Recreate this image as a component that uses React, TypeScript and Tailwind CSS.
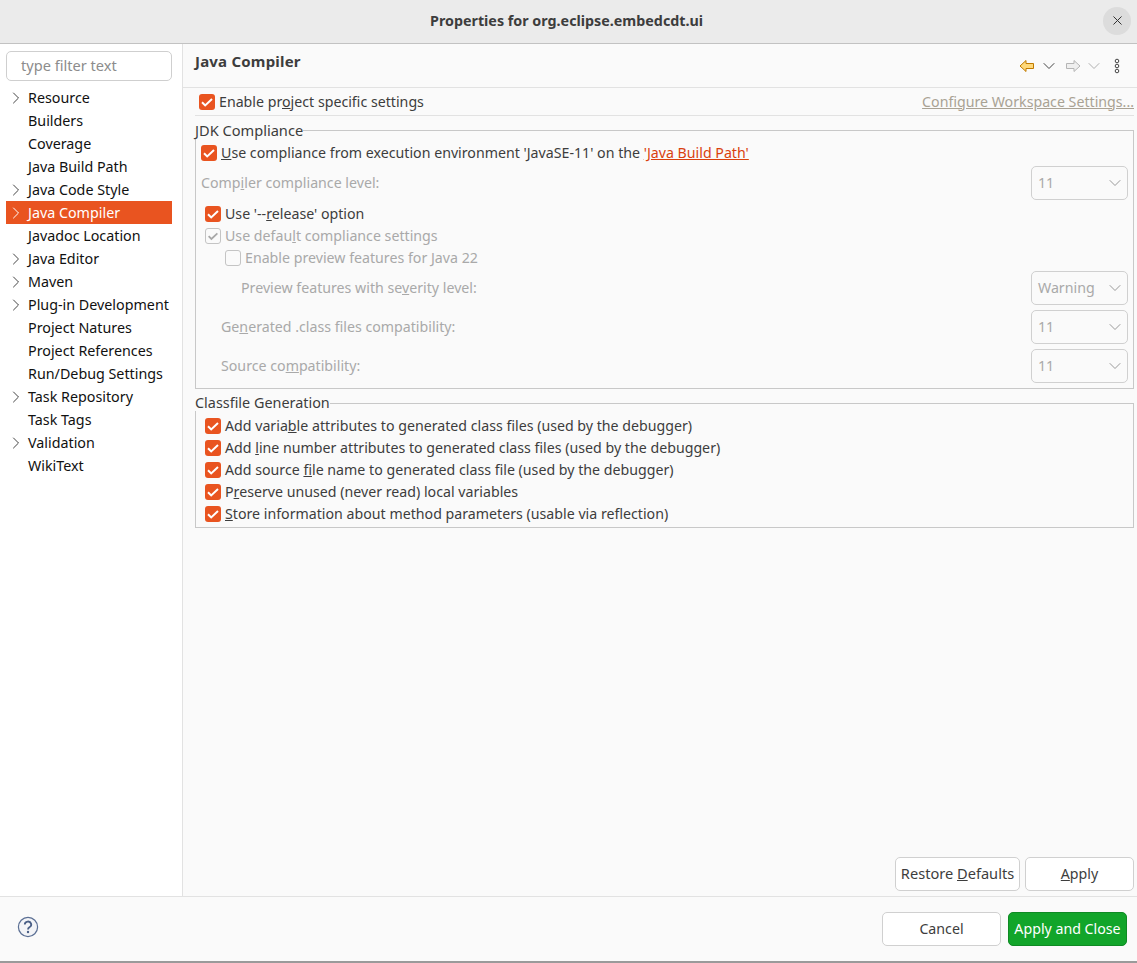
import { ChevronDown, ChevronRight, X } from "lucide-react";

const font = { fontFamily: '"Noto Sans", sans-serif' };

const tree = [
  { name: "Resource", arrow: true },
  { name: "Builders" },
  { name: "Coverage" },
  { name: "Java Build Path" },
  { name: "Java Code Style", arrow: true },
  { name: "Java Compiler", arrow: true, selected: true },
  { name: "Javadoc Location" },
  { name: "Java Editor", arrow: true },
  { name: "Maven", arrow: true },
  { name: "Plug-in Development", arrow: true },
  { name: "Project Natures" },
  { name: "Project References" },
  { name: "Run/Debug Settings" },
  { name: "Task Repository", arrow: true },
  { name: "Task Tags" },
  { name: "Validation", arrow: true },
  { name: "WikiText" },
];

const CheckMark = ({ color }: { color: string }) => (
  <svg viewBox="0 0 16 16" className="w-4 h-4" fill="none" stroke={color} strokeWidth="2">
    <path d="M3 8.2l3.2 3.2L13 5" />
  </svg>
);

const Check = ({ variant = "on" }: { variant?: "on" | "disabled" | "off" }) => {
  if (variant === "on")
    return (
      <span className="w-4 h-4 shrink-0 rounded-[3px] bg-[#e95420]">
        <CheckMark color="#ffffff" />
      </span>
    );
  return (
    <span className="w-4 h-4 shrink-0 rounded-[3px] border border-[#c4c4c4] bg-[#fafafa] flex items-center justify-center">
      {variant === "disabled" && <CheckMark color="#a8a8a8" />}
    </span>
  );
};

const Combo = ({ value }: { value: string }) => (
  <div className="w-[97px] h-[34px] rounded-[5px] border border-[#d0d0d0] flex items-center justify-between pl-[6px] pr-[2px] text-[#a9a9a9]">
    <span>{value}</span>
    <ChevronDown size={20} strokeWidth={1.1} className="text-[#8f8f8f]" />
  </div>
);

const Button = ({ children, className }: { children: React.ReactNode; className: string }) => (
  <button className={`h-[34px] rounded-[5px] border flex items-center justify-center ${className}`}>
    <span>{children}</span>
  </button>
);

const Arrow = ({ flip, fill, stroke }: { flip?: boolean; fill: string; stroke: string }) => (
  <svg viewBox="0 0 16 14" className={`w-4 h-[14px] ${flip ? "-scale-x-100" : ""}`} fill={fill} stroke={stroke} strokeWidth="1">
    <path d="M1 7l6-5.5V4.5h7.5v5H7v3z" />
  </svg>
);

export default function App() {
  return (
    <div style={font} className="w-[1137px] h-[963px] flex flex-col bg-white text-[14.2px] leading-[20px] text-[#3d3d3d] overflow-hidden">
      {/* title bar */}
      <header className="h-[44px] shrink-0 bg-[#ebebeb] border-b border-[#c2c2c2] flex items-center pl-[430px] pr-[6px] justify-between">
        <span className="font-bold text-[14.3px] text-[#3d3d3d] pb-[2px]">Properties for org.eclipse.embedcdt.ui</span>
        <button className="w-7 h-7 rounded-full bg-[#dcdcdc] flex items-center justify-center mb-[2px]">
          <X size={15} strokeWidth={1.6} className="text-[#333]" />
        </button>
      </header>

      <div className="flex flex-1 min-h-0">
        {/* tree */}
        <aside className="w-[183px] shrink-0 border-r border-[#e2e2e2] bg-white pt-[7px] pl-[6px] pr-[10px]">
          <div className="h-[30px] rounded-[5px] border border-[#cfcfcf] pl-[14px] pb-[3px] flex items-center text-[14.6px] text-[#8c8c8c]">
            type filter text
          </div>
          <ul className="mt-[5px] text-[14.3px] text-[#111]">
            {tree.map((item) => (
              <li
                key={item.name}
                className={`h-[23px] flex items-center ${item.selected ? "bg-[#e95420] text-white" : ""}`}
              >
                <span className="w-[22px] shrink-0 flex items-center justify-start">
                  {item.arrow && <ChevronRight size={20} strokeWidth={1.2} className={item.selected ? "text-white" : "text-[#444]"} />}
                </span>
                {item.name}
              </li>
            ))}
          </ul>
        </aside>

        {/* page */}
        <main className="flex-1 bg-[#fafafa] pl-[12px] pr-[3px] flex flex-col">
          <div className="h-[44px] shrink-0 flex items-start justify-between border-b border-[#e2e2e2] pr-[17px] -mr-[3px] -ml-[12px] pl-[12px] pt-[7px]">
            <span className="font-bold text-[15px] tracking-[0.2px] text-[#3d3d3d]">Java Compiler</span>
            <div className="flex items-center pt-[5px]">
              <Arrow fill="#ffd97a" stroke="#c07a00" />
              <ChevronDown size={20} strokeWidth={1.2} className="text-[#444] ml-[4px]" />
              <span className="ml-[6px]"><Arrow flip fill="#efefef" stroke="#b5b5b5" /></span>
              <ChevronDown size={20} strokeWidth={1.2} className="text-[#b0b0b0] ml-[3px]" />
              <svg viewBox="0 0 6 16" className="w-[6px] h-4 ml-[10px]" fill="none" stroke="#444" strokeWidth="1">
                <circle cx="3" cy="3" r="1.8" />
                <circle cx="3" cy="8" r="1.8" />
                <circle cx="3" cy="13" r="1.8" />
              </svg>
            </div>
          </div>

          <div className="h-[28px] shrink-0 flex items-center justify-between border-b border-[#e2e2e2]">
            <label className="flex items-center gap-[4px] pl-[4px]">
              <Check />
              <span>Enable pr<u>o</u>ject specific settings</span>
            </label>
            <a className="underline text-[#a9a294]">Configure Workspace Settings...</a>
          </div>

          <fieldset className="mt-[6px] h-[267px] shrink-0 border border-[#c8c8c8] pl-[5px] pr-[5px]">
            <legend className="-ml-[6px] leading-[16px] text-[14.6px] pb-[1px]">JDK Compliance</legend>
            <div className="h-[22px] mt-[3px] flex items-center gap-[4px]">
              <Check />
              <span><u>U</u>se compliance from execution environment 'JavaSE-11' on the <a className="underline text-[#d9410e]">'Java Build Path'</a></span>
            </div>
            <div className="h-[34px] mt-[2px] flex items-center justify-between text-[#a9a9a9]">
              <span>Comp<u>i</u>ler compliance level:</span>
              <Combo value="11" />
            </div>
            <div className="h-[22px] mt-[3px] pl-[4px] flex items-center gap-[4px]">
              <Check />
              <span>Use '--<u>r</u>elease' option</span>
            </div>
            <div className="h-[22px] pl-[4px] flex items-center gap-[4px] text-[#a9a9a9]">
              <Check variant="disabled" />
              <span>Use defau<u>l</u>t compliance settings</span>
            </div>
            <div className="h-[22px] pl-[24px] flex items-center gap-[4px] text-[#a9a9a9]">
              <Check variant="off" />
              <span>Enable preview features for Java 22</span>
            </div>
            <div className="h-[34px] mt-[2px] pl-[40px] flex items-center justify-between text-[#a9a9a9]">
              <span>Preview features with se<u>v</u>erity level:</span>
              <Combo value="Warning" />
            </div>
            <div className="h-[34px] mt-[5px] pl-[20px] flex items-center justify-between text-[#a9a9a9]">
              <span>Ge<u>n</u>erated .class files compatibility:</span>
              <Combo value="11" />
            </div>
            <div className="h-[34px] mt-[5px] pl-[20px] flex items-center justify-between text-[#a9a9a9]">
              <span>Source co<u>m</u>patibility:</span>
              <Combo value="11" />
            </div>
          </fieldset>

          <fieldset className="mt-[6px] h-[133px] shrink-0 border border-[#c8c8c8] pl-[9px] pr-[5px]">
            <legend className="-ml-[10px] leading-[16px] text-[14.4px]">Classfile Generation</legend>
            <div className="pt-[4px]">
              <div className="h-[22px] flex items-center gap-[4px]"><Check /><span>Add varia<u>b</u>le attributes to generated class files (used by the debugger)</span></div>
              <div className="h-[22px] flex items-center gap-[4px]"><Check /><span>Add <u>l</u>ine number attributes to generated class files (used by the debugger)</span></div>
              <div className="h-[22px] flex items-center gap-[4px]"><Check /><span>Add source <u>f</u>ile name to generated class file (used by the debugger)</span></div>
              <div className="h-[22px] flex items-center gap-[4px]"><Check /><span>P<u>r</u>eserve unused (never read) local variables</span></div>
              <div className="h-[22px] flex items-center gap-[4px]"><Check /><span><u>S</u>tore information about method parameters (usable via reflection)</span></div>
            </div>
          </fieldset>

          <div className="mt-auto mb-[5px] flex justify-end gap-[5px]">
            <Button className="w-[125px] text-[14.6px] pb-[2px] bg-white border-[#d0d0d0]">Restore <u>D</u>efaults</Button>
            <Button className="w-[109px] pb-[1px] bg-white border-[#d0d0d0]"><u>A</u>pply</Button>
          </div>
        </main>
      </div>

      {/* footer */}
      <footer className="h-[65px] shrink-0 bg-[#fafafa] border-t border-[#e2e2e2] flex items-center justify-between pl-[17px] pr-[10px]">
        <svg viewBox="0 0 22 22" className="w-[22px] h-[22px] mb-[4px]">
          <circle cx="11" cy="11" r="9.6" fill="#f3f4f7" stroke="#5b6f94" strokeWidth="1.2" />
          <path d="M7.8 8.5a3.2 3 0 1 1 4.6 2.7c-1 .6-1.4 1-1.4 2.2" fill="none" stroke="#4a5f86" strokeWidth="1.8" />
          <circle cx="11" cy="16" r="1.2" fill="#4a5f86" />
        </svg>
        <div className="flex gap-[7px]">
          <Button className="w-[119px] bg-white border-[#d0d0d0]">Cancel</Button>
          <Button className="w-[119px] bg-[#12a52a] border-[#0f8a24] text-white">Apply and Close</Button>
        </div>
      </footer>
      <div className="h-[2px] shrink-0 bg-[#9a9a9a]" />
    </div>
  );
}
